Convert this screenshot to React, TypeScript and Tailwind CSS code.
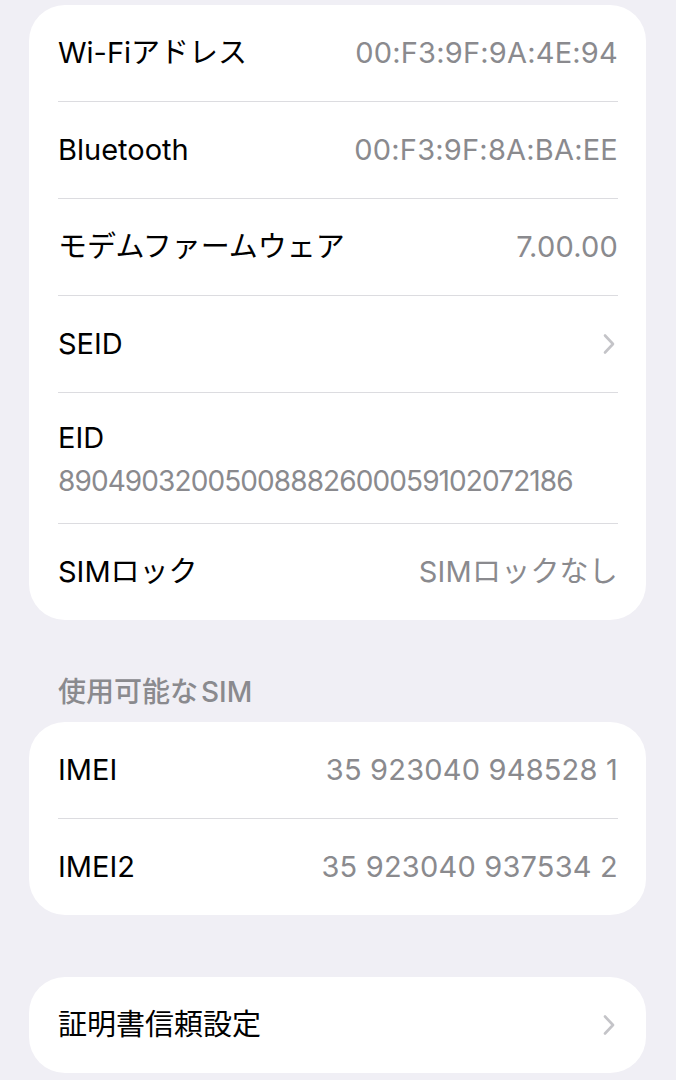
import React from "react";

const font = { fontFamily: '"Inter", "Noto Sans CJK JP", sans-serif' };

function Chevron() {
  return (
    <svg width="14" height="24" viewBox="0 0 14 24" fill="none">
      <path d="M3 3.5L11 12L3 20.5" stroke="#c4c4c8" strokeWidth="2.6" strokeLinecap="round" strokeLinejoin="round" />
    </svg>
  );
}

function Sep() {
  return <div className="h-px bg-[#dcdce0]" />;
}

function Row({ label, value, chevron }: { label: string; value?: string; chevron?: boolean }) {
  return (
    <div className="flex h-[96px] items-center justify-between">
      <span className="text-[29px] leading-[36px] text-black">{label}</span>
      {value && <span className="text-[29px] leading-[36px] text-[#8a8a8e] tracking-[0.2px]">{value}</span>}
      {chevron && (
        <span className="mr-[2px]">
          <Chevron />
        </span>
      )}
    </div>
  );
}

export default function App() {
  return (
    <div className="min-h-[1080px] bg-[#f0eff5] pl-[29px] pr-[30px] pt-[5px]" style={font}>
      <div className="rounded-[36px] bg-white pl-[29px] pr-[28px]">
        <Row label="Wi-Fiアドレス" value="00:F3:9F:9A:4E:94" />
        <Sep />
        <Row label="Bluetooth" value="00:F3:9F:8A:BA:EE" />
        <Sep />
        <Row label="モデムファームウェア" value="7.00.00" />
        <Sep />
        <Row label="SEID" chevron />
        <Sep />
        <div className="flex h-[130px] flex-col gap-[7px] pt-[27px]">
          <span className="text-[29px] leading-[36px] text-black">EID</span>
          <span className="text-[28px] leading-[36px] tracking-[-0.9px] text-[#8a8a8e]">89049032005008882600059102072186</span>
        </div>
        <Sep />
        <Row label="SIMロック" value="SIMロックなし" />
      </div>

      <div className="mt-[56px] mb-[14px] pl-[29px] text-[28px] font-medium leading-[32px] text-[#8a8a8e]">
        使用可能な<span className="ml-[3px]">SIM</span>
      </div>

      <div className="rounded-[36px] bg-white pl-[29px] pr-[28px]">
        <Row label="IMEI" value="35 923040 948528 1" />
        <Sep />
        <Row label="IMEI2" value="35 923040 937534 2" />
      </div>

      <div className="mt-[62px] rounded-[36px] bg-white pl-[29px] pr-[28px]">
        <Row label="証明書信頼設定" chevron />
      </div>
    </div>
  );
}
